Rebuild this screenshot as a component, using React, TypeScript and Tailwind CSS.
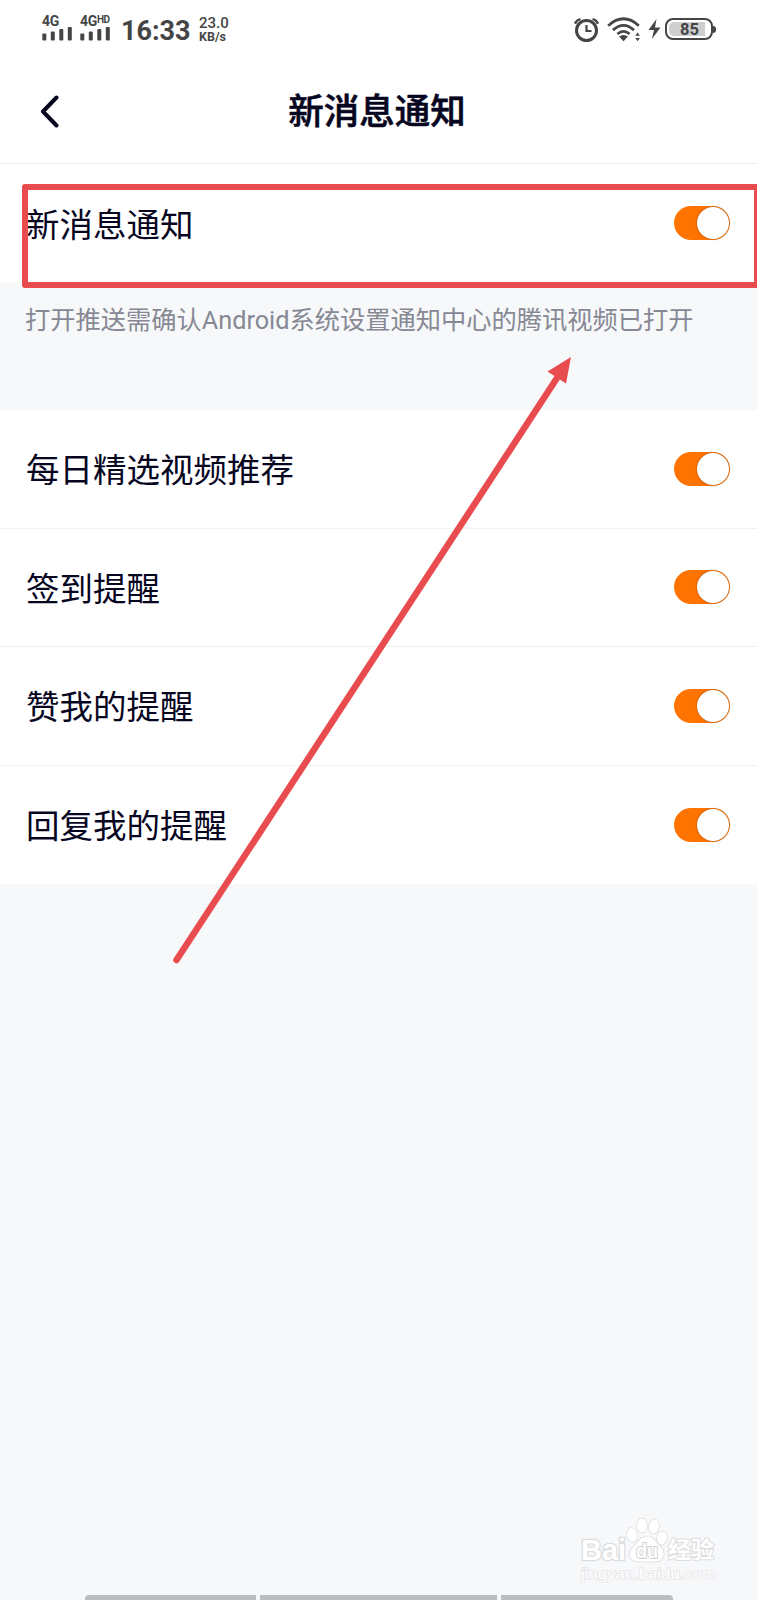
import { useState } from 'react';

const reminders = ['每日精选视频推荐', '签到提醒', '赞我的提醒', '回复我的提醒'];

function Signal({ label, suffix }: { label: string; suffix?: string }) {
  return (
    <div className="flex w-[38px] flex-col">
      <div className="flex h-[11px] items-start text-[14px] leading-[13px] font-bold tracking-tight">
        {label}
        {suffix && <span className="text-[10px] leading-[9px]">{suffix}</span>}
      </div>
      <svg width="32" height="15" viewBox="0 0 32 15" fill="currentColor">
        <rect x="0.3" y="7.5" width="4" height="7" rx="1" />
        <rect x="8.8" y="5.5" width="4" height="9" rx="1" />
        <rect x="17.3" y="3" width="4" height="11.5" rx="1" />
        <rect x="25.8" y="1" width="4" height="13.5" rx="1" />
      </svg>
    </div>
  );
}

function AlarmIcon() {
  return (
    <svg width="26" height="26" viewBox="0 0 26 26" fill="none" stroke="currentColor">
      <circle cx="12.5" cy="14.5" r="10" strokeWidth="3" />
      <path d="M12.5 9V15H17.5" strokeWidth="2.2" />
      <path d="M1 7.7Q2.5 4 6.5 3.1M24 7.7Q22.5 4 18.5 3.1" strokeWidth="2.4" />
    </svg>
  );
}

function WifiIcon() {
  return (
    <svg width="34" height="26" viewBox="0 0 34 26" fill="none" stroke="currentColor">
      <path d="M1.2 9.7Q16.5 -4.1 31.8 9.7" strokeWidth="2.8" />
      <path d="M6 14.1Q16.5 4.7 27 14.1" strokeWidth="2.8" />
      <path d="M10.4 18.1Q16.5 12.8 22.6 18.1" strokeWidth="2.6" />
      <path d="M12 20.5Q16.5 17.3 21 20.5L16.5 25.3Z" fill="currentColor" stroke="none" />
      <path d="M28.3 19.8L30.6 16.6L32.9 19.8ZM28.3 22L30.6 25.2L32.9 22Z" fill="currentColor" stroke="none" />
    </svg>
  );
}

function StatusBar() {
  return (
    <div className="flex h-[70px] items-start bg-white pl-[42px] pt-[15px] font-['Roboto','Noto_Sans_CJK_SC',sans-serif] text-[#454545]">
      <Signal label="4G" />
      <Signal label="4G" suffix="HD" />
      <span className="ml-[3px] mt-[3px] w-[78px] text-[27px] leading-[27px] font-bold whitespace-nowrap">16:33</span>
      <div className="mt-[2px] flex flex-col text-[13px] leading-[13px] font-medium">
        <span className="text-[15px]">23.0</span>
        <span className="text-[12.5px] font-bold">KB/s</span>
      </div>
      <div className="ml-auto mr-[41px] mt-px flex items-center">
        <AlarmIcon />
        <div className="ml-[7px]">
          <WifiIcon />
        </div>
        <svg className="ml-[7px]" width="13" height="22" viewBox="0 0 13 22" fill="currentColor">
          <path d="M8.5 1L0.5 12H6L4 21L12.5 9.5H7Z" />
        </svg>
        <div className="ml-[4px] flex items-center">
          <div className="flex h-[22px] w-[48px] rounded-[8px] border-2 border-current p-[2px]">
            <div className="flex w-[36px] items-center justify-center rounded-l-[5px] bg-[#cfcfcf] pl-[5px] pt-[2px] text-[16.5px] leading-none font-bold">
              85
            </div>
          </div>
          <div className="h-[7px] w-[3px] rounded-r bg-current" />
        </div>
      </div>
    </div>
  );
}

function Toggle({ label }: { label: string }) {
  const [on, setOn] = useState(true);

  return (
    <button
      role="switch"
      aria-checked={on}
      aria-label={label}
      onClick={() => setOn(!on)}
      className={`flex h-[34px] w-[56px] items-center rounded-full p-px ${on ? 'justify-end bg-[#ff7300]' : 'bg-gray-300'}`}
    >
      <span className="size-8 rounded-full bg-white shadow-[0_0_2px_0px_rgba(80,60,40,0.7)]" />
    </button>
  );
}

function SettingRow({ label }: { label: string }) {
  return (
    <div className="flex h-full items-center justify-between pl-[26px] pr-[27px]">
      <span className="pt-[5px] text-[33.5px] leading-[48px]">{label}</span>
      <Toggle label={label} />
    </div>
  );
}

function Watermark() {
  return (
    <svg
      className="absolute left-[578px] top-[1512px]"
      width="145"
      height="76"
      viewBox="0 0 145 76"
      fill="#fff"
      stroke="#dcdddf"
      strokeWidth="1.5"
      paintOrder="stroke"
    >
      <text x="3" y="48" fontSize="29" fontWeight="700" fontFamily="Liberation Sans" textLength="45" lengthAdjust="spacingAndGlyphs" strokeWidth="2.5">Bai</text>
      <ellipse cx="54" cy="23" rx="5" ry="7" transform="rotate(-10 54 23)" />
      <ellipse cx="64" cy="13.5" rx="5" ry="7" />
      <ellipse cx="76" cy="14.5" rx="5" ry="7" transform="rotate(10 76 14.5)" />
      <ellipse cx="84" cy="26" rx="5" ry="6.5" transform="rotate(10 84 26)" />
      <path d="M69 24.5C76 24.5 78 31 83 35.5C88 40 86 49.5 78 49.5H60C51 49.5 49 41 55 35.5C60 31 62 24.5 69 24.5Z" />
      <text x="58" y="46" fontSize="20" fontFamily="Liberation Sans" fontWeight="700" textLength="22" lengthAdjust="spacingAndGlyphs" stroke="#cfd0d2" strokeWidth="2">du</text>
      <text x="90" y="46" fontSize="23" fontFamily="Noto Sans CJK SC" fontWeight="700" textLength="46" strokeWidth="2">经验</text>
      <text x="3" y="67" fontSize="15.5" fontFamily="Liberation Sans" textLength="135" lengthAdjust="spacingAndGlyphs" stroke="#e6e7e9">jingyan.baidu.com</text>
    </svg>
  );
}

export default function App() {
  return (
    <div className="relative flex h-[1600px] w-[757px] flex-col overflow-hidden bg-[#f6f8fa] font-['Roboto','Noto_Sans_CJK_SC',sans-serif] text-[#07061f]">
      <StatusBar />

      <header className="grid h-[94px] grid-cols-[80px_1fr_80px] items-center border-b border-[#eeeeee] bg-white pb-[10px]">
        <button aria-label="返回" className="pl-[39px]">
          <svg width="20" height="33" viewBox="0 0 20 33" fill="none" stroke="currentColor" strokeWidth="4" strokeLinecap="round" strokeLinejoin="round">
            <path d="M17.5 2.5L4 16.5L17.5 30.5" />
          </svg>
        </button>
        <h1 className="pr-[3px] text-center text-[35.5px] leading-[50px] font-medium [-webkit-text-stroke:0.6px_#07061f]">新消息通知</h1>
      </header>

      <section className="h-[118px] bg-white">
        <SettingRow label="新消息通知" />
      </section>

      <p className="h-[128px] pl-[25px] pt-[21px] text-[25.25px] leading-[36px] whitespace-nowrap text-[#878894]">
        打开推送需确认Android系统设置通知中心的腾讯视频已打开
      </p>

      <section className="grid h-[474px] grid-rows-4 divide-y divide-[#f1f1f2] bg-white">
        {reminders.map((label) => (
          <SettingRow key={label} label={label} />
        ))}
      </section>

      <div className="mt-auto flex h-[5px] gap-1 pl-[85px]">
        <div className="w-[171px] rounded-tl bg-[#bcbdbf]" />
        <div className="w-[237px] bg-[#bcbdbf]" />
        <div className="w-[172px] rounded-tr bg-[#bcbdbf]" />
      </div>

      <Watermark />

      {/* highlight frame and pointer drawn over the settings */}
      <div className="pointer-events-none absolute left-[22px] top-[184px] h-[104px] w-[738px] rounded-[3px] border-[6px] border-[#e84c4f]" />
      <svg className="pointer-events-none absolute left-0 top-0" width="757" height="1000" fill="#e84c4f" stroke="#e84c4f">
        <path d="M176.5 960L557 378" strokeWidth="6.5" strokeLinecap="round" />
        <path d="M571 357L547.5 371.5L566 383.5Z" stroke="none" />
      </svg>
    </div>
  );
}
